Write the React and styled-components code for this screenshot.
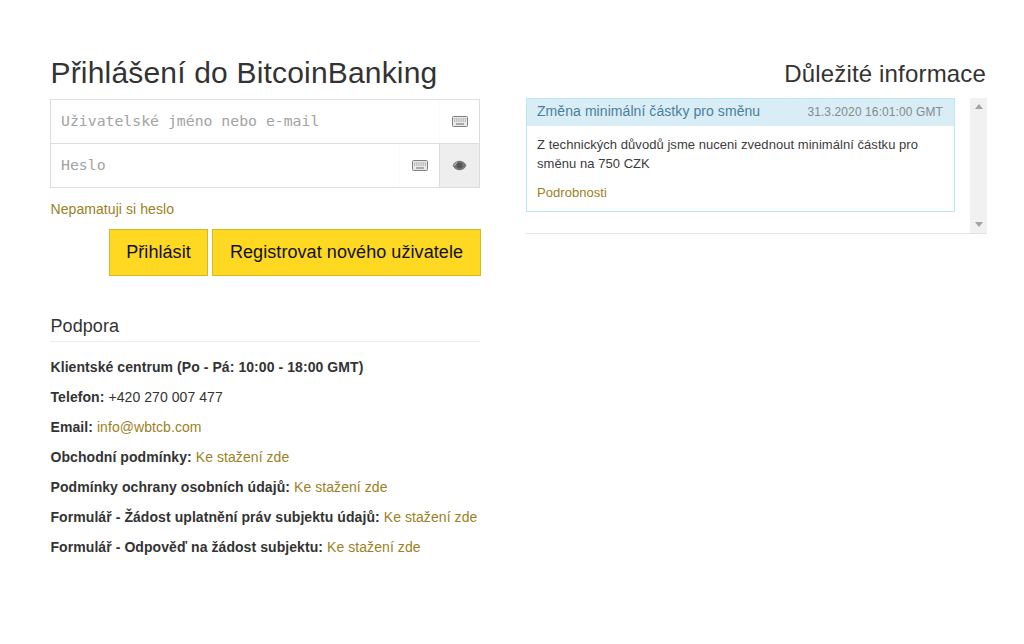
import React from 'react';
import styled, { createGlobalStyle } from 'styled-components';

const GlobalStyle = createGlobalStyle`
  html, body { margin: 0; padding: 0; background: #fff; }
  body {
    font-family: "Liberation Sans", Arial, sans-serif;
    font-size: 14px;
    line-height: 20px;
    letter-spacing: 0.07px;
    color: #333;
  }
  * { box-sizing: border-box; }
`;

const Page = styled.div`
  display: grid;
  grid-template-columns: 430px 461px;
  column-gap: 46px;
  padding: 50px 0 0 50px;
  height: 644px;
`;

const Left = styled.div``;
const Right = styled.div``;

const Title = styled.h1`
  margin: 2px 0 6px;
  padding-left: 0.5px;
  font-size: 30px;
  line-height: 41px;
  font-weight: 400;
  letter-spacing: 0.18px;
  color: #333;
`;

const RightTitle = styled(Title)`
  font-size: 24px;
  line-height: 48px;
  letter-spacing: 0.17px;
  text-align: right;
  margin: 0;
  padding-right: 1px;
`;

const InputGroup = styled.div`
  display: flex;
  height: 45px;
  border: 1px solid #ddd;
  margin-top: ${(p) => (p.$second ? '-1px' : '0')};
  background: #fff;
`;

const Field = styled.div`
  flex: 1;
  padding-left: 10px;
  font-family: "DejaVu Sans Mono", "Liberation Mono", monospace;
  font-size: 14.8px;
  letter-spacing: 0;
  line-height: 42px;
  color: #a3a3a3;
`;

const Addon = styled.div`
  width: 40px;
  display: flex;
  align-items: center;
  justify-content: center;
  background: ${(p) => (p.$grey ? '#eee' : '#fff')};
  border-left: ${(p) => (p.$grey ? '1px solid #ddd' : '1px solid #fbfbfb')};
`;

const Link = styled.a`
  color: #9c8124;
  text-decoration: none;
`;

const Forgot = styled.div`
  margin-top: 11px;
  padding-left: 0.5px;
  height: 20px;
`;

const Buttons = styled.div`
  display: flex;
  justify-content: flex-end;
  gap: 4px;
  margin-top: 10px;
  margin-right: -1px;
`;

const Button = styled.button`
  height: 47px;
  width: ${(p) => p.$width}px;
  padding: 0;
  font-family: inherit;
  font-size: 18px;
  letter-spacing: 0.07px;
  color: #111;
  background: #ffd821;
  border: 1px solid #d8b62a;
  border-radius: 0;
`;

const SectionTitle = styled.h3`
  margin: 39px 0 15px;
  padding: 0 0 4px 0.5px;
  font-size: 18px;
  line-height: 22px;
  font-weight: 400;
  color: #333;
  border-bottom: 1px solid #eee;
`;

const Line = styled.p`
  margin: 0 0 10px;
  padding-left: 0.5px;
  height: 20px;
  white-space: nowrap;
`;

const NewsBox = styled.div`
  display: flex;
  height: 136px;
  border-bottom: 1px solid #e5e5e5;
`;

const NewsList = styled.div`
  flex: 1;
`;

const Card = styled.div`
  height: 114px;
  border: 1px solid #bce8f1;
  margin-right: 15px;
`;

const CardHead = styled.div`
  display: flex;
  justify-content: space-between;
  align-items: center;
  height: 27px;
  padding: 0 11px 2px 10px;
  background: #d9edf7;
`;

const CardTitle = styled.span`
  position: relative;
  top: -1px;
  color: #4a7f9a;
`;

const CardDate = styled.span`
  font-size: 12px;
  color: #888;
  letter-spacing: 0.1px;
`;

const CardBody = styled.div`
  padding: 9px 10px;
  font-size: 13px;
  line-height: 19px;
  letter-spacing: 0.05px;
  color: #3c3c3c;
`;

const Details = styled.div`
  margin-top: 10px;
`;

const Scrollbar = styled.div`
  width: 17px;
  background: #f1f1f1;
  display: flex;
  flex-direction: column;
  justify-content: space-between;
  align-items: center;
  padding: 6px 0;
`;

const KeyboardIcon = () => (
  <svg width="16" height="11" viewBox="0 0 16 11">
    <rect x="0.5" y="0.5" width="15" height="10" rx="1" fill="#e8e8e8" stroke="#808080" />
    <path d="M2 3h12M2 5h12" stroke="#999" strokeWidth="1" strokeDasharray="1.2 0.6" />
    <path d="M4 8h8" stroke="#808080" strokeWidth="1.2" />
  </svg>
);

const EyeIcon = () => (
  <svg width="15" height="11" viewBox="0 0 15 11">
    <path d="M0.5 5.5C2.5 2 5 0.8 7.5 0.8S12.5 2 14.5 5.5C12.5 9 10 10.2 7.5 10.2S2.5 9 0.5 5.5Z" fill="#777" />
    <circle cx="7.5" cy="5.5" r="3" fill="#555" />
    <path d="M2.2 5.5C3.2 4 4 3.2 5 2.6" stroke="#eee" strokeWidth="0.8" fill="none" />
  </svg>
);

const ArrowUp = () => (
  <svg width="8" height="5" viewBox="0 0 8 5"><path d="M4 0L8 5H0Z" fill="#a3a3a3" /></svg>
);

const ArrowDown = () => (
  <svg width="8" height="5" viewBox="0 0 8 5"><path d="M0 0H8L4 5Z" fill="#a3a3a3" /></svg>
);

const support = [
  ['Telefon:', '+420 270 007 477', false],
  ['Email:', 'info@wbtcb.com', true],
  ['Obchodní podmínky:', 'Ke stažení zde', true],
  ['Podmínky ochrany osobních údajů:', 'Ke stažení zde', true],
  ['Formulář - Žádost uplatnění práv subjektu údajů:', 'Ke stažení zde', true],
  ['Formulář - Odpověď na žádost subjektu:', 'Ke stažení zde', true],
];

const App = () => {
  return (
    <Page>
      <GlobalStyle />
      <Left>
        <Title>Přihlášení do BitcoinBanking</Title>
        <InputGroup>
          <Field>Uživatelské jméno nebo e-mail</Field>
          <Addon><KeyboardIcon /></Addon>
        </InputGroup>
        <InputGroup $second>
          <Field>Heslo</Field>
          <Addon><KeyboardIcon /></Addon>
          <Addon $grey><EyeIcon /></Addon>
        </InputGroup>
        <Forgot><Link href="#">Nepamatuji si heslo</Link></Forgot>
        <Buttons>
          <Button $width={99}>Přihlásit</Button>
          <Button $width={269}>Registrovat nového uživatele</Button>
        </Buttons>
        <SectionTitle>Podpora</SectionTitle>
        <Line><b>Klientské centrum (Po - Pá: 10:00 - 18:00 GMT)</b></Line>
        {support.map(([label, value, isLink]) => (
          <Line key={label}>
            <b>{label}</b> {isLink ? <Link href="#">{value}</Link> : value}
          </Line>
        ))}
      </Left>
      <Right>
        <RightTitle>Důležité informace</RightTitle>
        <NewsBox>
          <NewsList>
            <Card>
              <CardHead>
                <CardTitle>Změna minimální částky pro směnu</CardTitle>
                <CardDate>31.3.2020 16:01:00 GMT</CardDate>
              </CardHead>
              <CardBody>
                Z technických důvodů jsme nuceni zvednout minimální částku pro směnu na 750 CZK
                <Details><Link href="#">Podrobnosti</Link></Details>
              </CardBody>
            </Card>
          </NewsList>
          <Scrollbar>
            <ArrowUp />
            <ArrowDown />
          </Scrollbar>
        </NewsBox>
      </Right>
    </Page>
  );
};

export default App;
